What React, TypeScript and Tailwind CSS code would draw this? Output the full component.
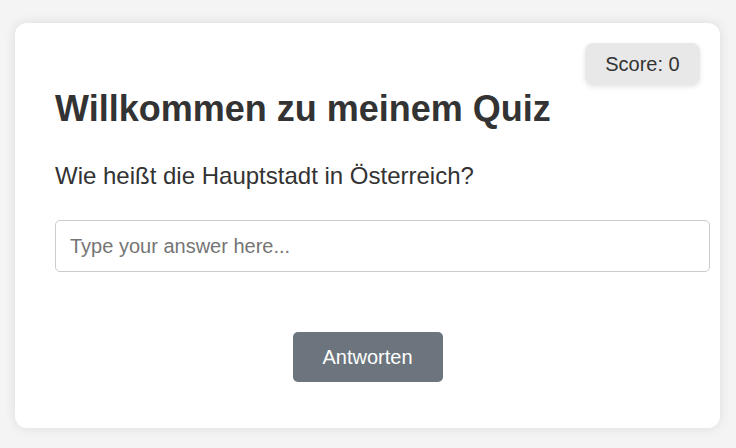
export default function App() {
  return (
    <div className="min-h-[448px] w-[736px] bg-[#f4f4f4] pt-[23px] pl-[15px]" style={{ fontFamily: '"Liberation Sans", Arial, sans-serif' }}>
      <div className="relative w-[705px] h-[405px] rounded-[12px] bg-white px-[40px] pt-[65px] shadow-[0_0_12px_rgba(0,0,0,0.1)] text-[#333]">
        {/* Score */}
        <div className="absolute top-[20px] right-[20px] flex h-[42px] w-[115px] items-center justify-center rounded-[8px] bg-[#e8e8e8] text-[20px] shadow-[0_2px_5px_rgba(0,0,0,0.1)]">
          Score: 0
        </div>

        <h1 className="text-[36px] font-bold leading-[41px]">Willkommen zu meinem Quiz</h1>
        <p className="mt-[33px] text-[24px] leading-[28px]">Wie heißt die Hauptstadt in Österreich?</p>

        <input
          type="text"
          placeholder="Type your answer here..."
          className="mt-[30px] block h-[52px] w-[655px] rounded-[5px] border border-[#ccc] px-[14px] text-[20px] placeholder:text-[#757575] outline-none"
        />

        <div className="mt-[60px] flex justify-center">
          <button className="h-[50px] w-[150px] rounded-[5px] bg-[#6c757d] text-[20px] text-white">
            Antworten
          </button>
        </div>
      </div>
    </div>
  );
}
